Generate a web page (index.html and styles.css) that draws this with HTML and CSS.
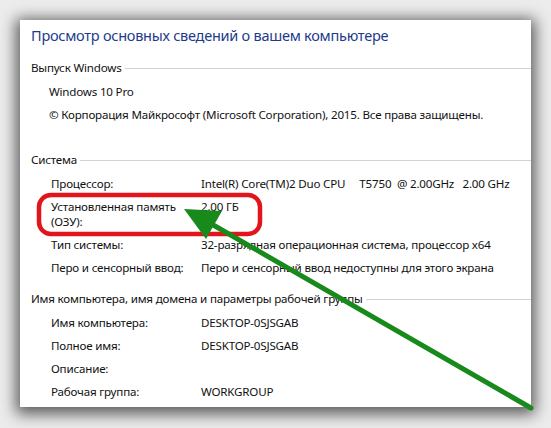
FILE: index.html
```html
<!DOCTYPE html>
<html lang="ru">
<head>
<meta charset="utf-8">
<title>Система</title>
<link rel="stylesheet" href="styles.css">
</head>
<body>
<div class="panel">
  <h1 class="title">Просмотр основных сведений о вашем компьютере</h1>

  <section class="group group-first">
    <div class="group-head"><span>Выпуск Windows</span></div>
    <div class="line">Windows 10 Pro</div>
    <div class="line">© Корпорация Майкрософт (Microsoft Corporation), 2015. Все права защищены.</div>
  </section>

  <section class="group">
    <div class="group-head"><span>Система</span></div>
    <div class="row"><span class="label">Процессор:</span><span class="value pre">Intel(R) Core(TM)2 Duo CPU     T5750  @ 2.00GHz   2.00 GHz</span></div>
    <div class="row"><span class="label">Установленная память (ОЗУ):</span><span class="value">2,00 ГБ</span></div>
    <div class="row"><span class="label">Тип системы:</span><span class="value">32-разрядная операционная система, процессор x64</span></div>
    <div class="row"><span class="label">Перо и сенсорный ввод:</span><span class="value">Перо и сенсорный ввод недоступны для этого экрана</span></div>
  </section>

  <section class="group">
    <div class="group-head"><span>Имя компьютера, имя домена и параметры рабочей группы</span></div>
    <div class="row"><span class="label">Имя компьютера:</span><span class="value">DESKTOP-0SJSGAB</span></div>
    <div class="row"><span class="label">Полное имя:</span><span class="value">DESKTOP-0SJSGAB</span></div>
    <div class="row"><span class="label">Описание:</span><span class="value"></span></div>
    <div class="row"><span class="label">Рабочая группа:</span><span class="value">WORKGROUP</span></div>
  </section>
</div>

<svg class="overlay" width="551" height="428" viewBox="0 0 551 428" aria-hidden="true">
  <rect class="mark" x="39" y="195" width="221" height="39" rx="12" ry="12"/>
  <line class="arrow-shaft" x1="531" y1="408" x2="208" y2="222"/>
  <polygon class="arrow-head" points="184,209 222,211 206,239"/>
</svg>
</body>
</html>
```

FILE: styles.css
```css
html, body {
  margin: 0;
  padding: 0;
}

body {
  width: 551px;
  height: 428px;
  overflow: hidden;
  position: relative;
  background: #ececec;
  font-family: "Noto Sans", "Open Sans", sans-serif;
  font-size: 11.6px;
  letter-spacing: -0.2px;
  color: #111;
}

.panel {
  margin: 20px 0 0 20px;
  width: 511px;
  height: 387px;
  background: #fff;
  box-shadow: 0 3px 14px 4px rgba(0, 0, 0, 0.62);
  overflow: hidden;
}

.title {
  margin: 4px 0 0 11px;
  font-size: 14.5px;
  letter-spacing: -0.25px;
  font-weight: 400;
  line-height: 22px;
  color: #1e3a8c;
}

.group {
  margin-top: 12px;
}

.group-first {
  margin-top: 14px;
  padding-bottom: 14px;
}

.group-head {
  display: flex;
  align-items: center;
  padding-left: 11px;
  padding-bottom: 5px;
  line-height: 15px;
}

.group-head::after {
  content: "";
  flex: 1;
  height: 1px;
  margin-left: 3px;
  margin-top: 1px;
  background: #d2d2d2;
}

.line {
  padding: 4px 0 4px 29px;
  line-height: 15px;
  white-space: nowrap;
}

.row {
  display: grid;
  grid-template-columns: 150px 1fr;
  padding: 4px 0 4px 31px;
  line-height: 15px;
}

.label {
  padding-right: 8px;
}

.value {
  white-space: nowrap;
}

.pre {
  white-space: pre;
}

.overlay {
  position: absolute;
  left: 0;
  top: 0;
  pointer-events: none;
}

.mark {
  fill: none;
  stroke: #e3151c;
  stroke-width: 4.5;
}

.arrow-shaft {
  stroke: #178a1b;
  stroke-width: 5;
  stroke-linecap: round;
}

.arrow-head {
  fill: #178a1b;
}
```
